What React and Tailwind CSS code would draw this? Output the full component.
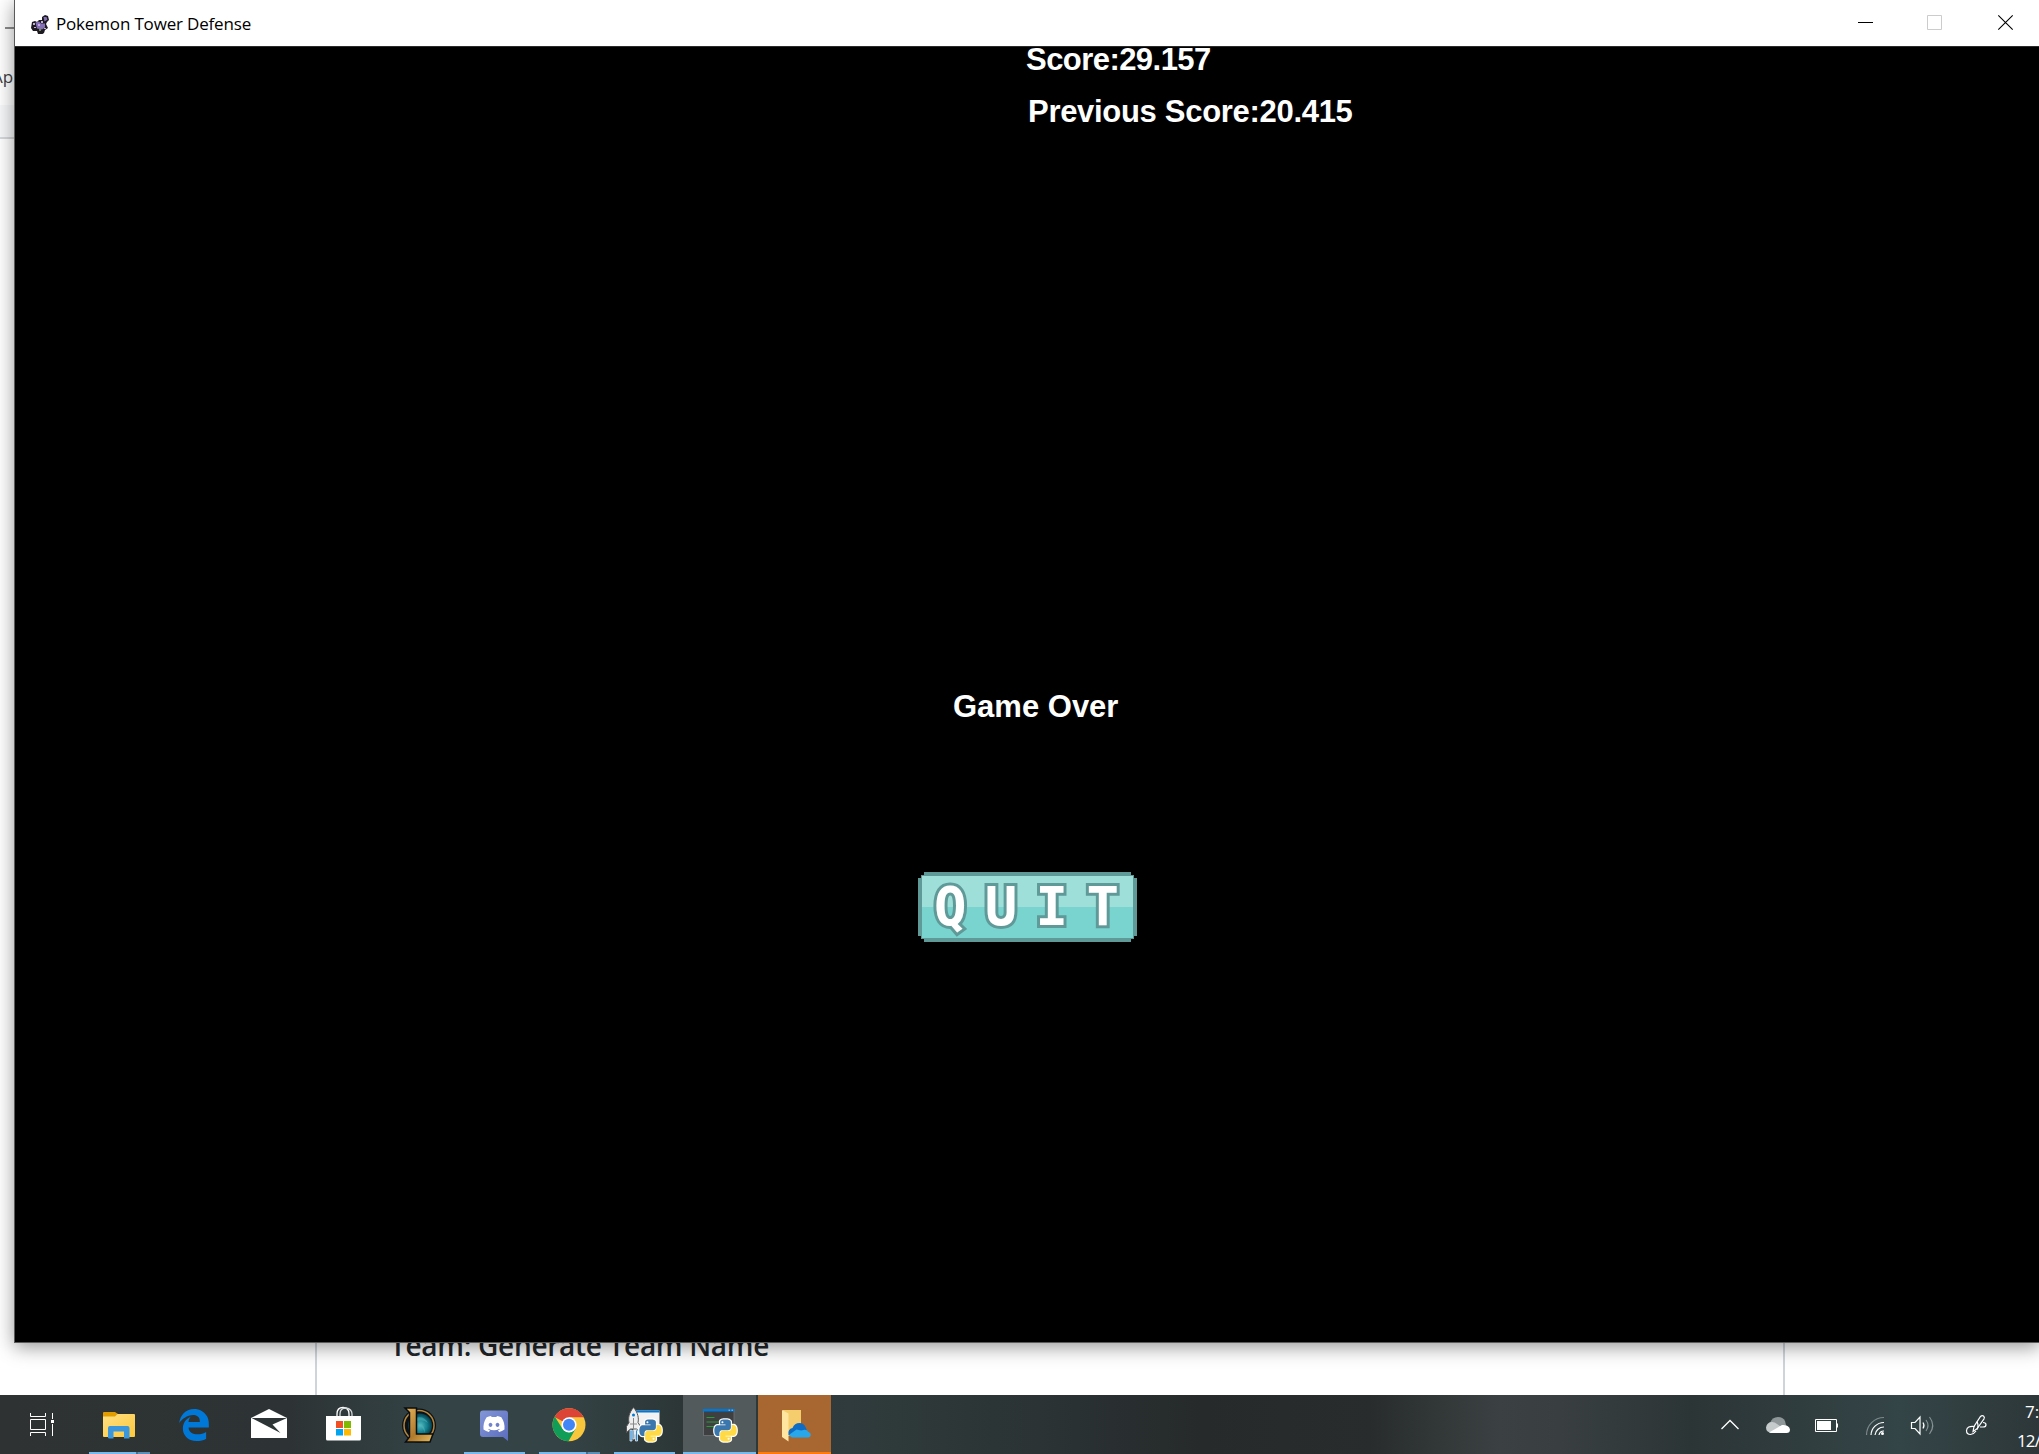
import React from "react";
import { FaDiscord, FaEdgeLegacy } from "react-icons/fa";

const PY_BLUE =
  "M14.25.18l.9.2.73.26.59.3.45.32.34.34.25.34.16.33.1.3.04.26.02.2-.01.13V8.5l-.05.63-.13.55-.21.46-.26.38-.3.31-.33.25-.35.19-.35.14-.33.1-.3.07-.26.04-.21.02H8.77l-.69.05-.59.14-.5.22-.41.27-.33.32-.27.35-.2.36-.15.37-.1.35-.07.32-.04.27-.02.21v3.06H3.17l-.21-.03-.28-.07-.32-.12-.35-.18-.36-.26-.36-.36-.35-.46-.32-.59-.28-.73-.21-.88-.14-1.05-.05-1.23.06-1.22.16-1.04.24-.87.32-.71.36-.57.4-.44.42-.33.42-.24.4-.16.36-.1.32-.05.24-.01h.16l.06.01h8.16v-.83H6.18l-.01-2.75-.02-.37.05-.34.11-.31.17-.28.25-.26.31-.23.38-.2.44-.18.51-.15.58-.12.64-.1.71-.06.77-.04.84-.02 1.27.05z";
const PY_YELLOW =
  "M21.04 6.11l.28.06.32.12.35.18.36.27.36.35.35.47.32.59.28.73.21.88.14 1.04.05 1.23-.06 1.23-.16 1.04-.24.86-.32.71-.36.57-.4.45-.42.33-.42.24-.4.16-.36.09-.32.05-.24.02-.16-.01h-8.22v.82h5.84l.01 2.76.02.36-.05.34-.11.31-.17.29-.25.25-.31.24-.38.2-.44.17-.51.15-.58.13-.64.09-.71.07-.77.04-.84.01-1.27-.04-1.07-.14-.9-.2-.73-.25-.59-.3-.45-.33-.34-.34-.25-.34-.16-.33-.1-.3-.04-.25-.02-.2.01-.13v-5.34l.05-.64.13-.54.21-.46.26-.38.3-.32.33-.24.35-.2.35-.14.33-.1.3-.06.26-.04.21-.02.13-.01h5.84l.69-.05.59-.14.5-.21.41-.28.33-.32.27-.35.2-.36.15-.36.1-.35.07-.32.04-.28.02-.21V6.07h2.09z";

function PythonMark({ x, y, size }) {
  return (
    <svg x={x} y={y} width={size} height={size} viewBox="-1.5 -1.5 27 27">
      <path d={PY_BLUE} fill="#fff" stroke="#fff" strokeWidth="2.6" />
      <path d={PY_YELLOW} fill="#fff" stroke="#fff" strokeWidth="2.6" />
      <path d={PY_BLUE} fill="#3b77ac" />
      <path d={PY_YELLOW} fill="#ffda45" />
      <circle cx="8.7" cy="3" r="1.1" fill="#fff" />
      <circle cx="15.3" cy="21" r="1.1" fill="#fff" />
    </svg>
  );
}

function Glyph({ children }) {
  return (
    <svg width="73" height="59" viewBox="0 0 73 59" className="block">
      {children}
    </svg>
  );
}

const TaskView = () => (
  <Glyph>
    <g fill="none" stroke="#fff" strokeWidth="1">
      <path d="M22.5 18v3.5h15V18M22.5 24.5h15v10h-15zM22.5 41v-3.5h15V41M44.5 18v6M44.5 29v12" />
    </g>
    <rect x="43" y="25" width="3" height="3" fill="#fff" />
  </Glyph>
);

const Explorer = () => (
  <Glyph>
    <defs>
      <linearGradient id="fold" x1="0" y1="0" x2="1" y2="1">
        <stop offset="0" stopColor="#ffe083" />
        <stop offset="1" stopColor="#fcc83c" />
      </linearGradient>
    </defs>
    <path d="M20 18q0-1 1-1h11l3 2-2 4H20z" fill="#e19d00" />
    <path d="M20 21.500h12l2.500-2.500H51q1 0 1 1v21q0 1-1 1H21q-1 0-1-1z" fill="url(#fold)" />
    <path d="M25 43V33q0-2 2-2h17.500q2 0 2 2v10.500h-5.500v-7H30.500v7H26z" fill="#3a96dd" />
  </Glyph>
);

const Edge = () => (
  <Glyph>
    <FaEdgeLegacy x="19.5" y="13.5" size="33" color="#0078d7" />
  </Glyph>
);

const Mail = () => (
  <Glyph>
    <path d="M18 23l18-9 18 9v20H18z" fill="#fff" />
    <path d="M18.500 23H54L39.500 29.500 47.500 38 18.500 23z" fill="#2d3435" />
  </Glyph>
);

const Store = () => (
  <Glyph>
    <g fill="none" stroke="#fff" strokeWidth="1.300">
      <path d="M29 22v-3q0-6.500 6-6.500t6 6.500v3" />
      <path d="M32 22v-3q0-6 6-6 6 1 6 6v3" stroke="#d3d6d6" />
    </g>
    <path d="M18 21h35v23q0 1.500-1.500 1.500h-32Q18 45.500 18 44z" fill="#fff" />
    <rect x="28" y="26" width="7" height="7" fill="#f25022" />
    <rect x="36" y="26" width="7" height="7" fill="#7fba00" />
    <rect x="28" y="34" width="7" height="6.500" fill="#00a4ef" />
    <rect x="36" y="34" width="7" height="6.500" fill="#ffb900" />
  </Glyph>
);

const League = () => (
  <Glyph>
    <defs>
      <linearGradient id="gold" x1="0" y1="0" x2="1" y2="1">
        <stop offset="0" stopColor="#e5b45c" />
        <stop offset=".55" stopColor="#b07a2b" />
        <stop offset="1" stopColor="#e8bd60" />
      </linearGradient>
      <radialGradient id="teal">
        <stop offset="0" stopColor="#55bac0" />
        <stop offset=".6" stopColor="#137f8d" />
        <stop offset="1" stopColor="#063e4c" />
      </radialGradient>
    </defs>
    <circle cx="36" cy="30.500" r="17" fill="#0a1218" />
    <circle cx="36" cy="30.500" r="15" fill="#0a1218" stroke="#b5853a" strokeWidth="1.500" />
    <circle cx="37" cy="30.500" r="12" fill="url(#teal)" />
    <path d="M32 23q9-3 13 5-6-5-13-1zM36 29q6 0 6 9-2-6-6-7z" fill="#52b4b8" opacity=".55" />
    <path d="M22 13h11.500v26H50l-3 8H22.500l4-5V17.500z" fill="url(#gold)" stroke="#0b0e10" strokeWidth="1.500" />
  </Glyph>
);

const Discord = () => (
  <Glyph>
    <defs>
      <linearGradient id="disc" x1="0" y1="0" x2="1" y2="1">
        <stop offset="0" stopColor="#8396d8" />
        <stop offset="1" stopColor="#5a6cbd" />
      </linearGradient>
    </defs>
    <path d="M25 15.500h22q3 0 3 3V46l-5-4H25q-3 0-3-3V18.500q0-3 3-3z" fill="url(#disc)" />
    <FaDiscord x="24.5" y="17.5" size="23" color="#fff" />
  </Glyph>
);

const Chrome = () => (
  <Glyph>
    <g transform="translate(36 29.800)">
      <circle r="16.500" fill="#f8c73c" />
      <path d="M0 0L-14.500-7.900A16.500 16.500 0 0 1 14.700-7.600H0z" fill="#db4437" />
      <path d="M-14.300-8.200A16.500 16.500 0 0 0 -.5 16.500L6.600 4 0 7.700-6.700 3.800z" fill="#0f9d58" />
      <circle r="7.600" fill="#fff" />
      <circle r="6" fill="#4285f4" />
    </g>
  </Glyph>
);

const RocketPython = () => (
  <Glyph>
    <rect x="25" y="15.500" width="26.500" height="24" fill="#f2f2f2" />
    <rect x="25" y="15.500" width="26.500" height="2" fill="#0078d7" />
    <path d="M22 35h2v11h-2zM25 35h1.500v9H25zM27.500 35h2v11h-2z" fill="#2a8ad4" stroke="#fff" strokeWidth=".7" />
    <path d="M25.500 12.500c-4.500 5-5.500 11-4.500 15l-2.500 4v6l4-3.500h6l4 3.500v-6l-2.500-4c1-4 0-10-4.500-15z" fill="#eee" stroke="#555" strokeWidth="1" />
    <path d="M25.500 23v12M22 29h7" stroke="#888" strokeWidth="1" fill="none" />
    <circle cx="25.500" cy="20" r="1.500" fill="#0078d7" />
    <PythonMark x="30" y="23" size="25" />
  </Glyph>
);

const ConsolePython = () => (
  <Glyph>
    <rect x="20.500" y="14.500" width="30.500" height="26" fill="#3d3f40" stroke="#707474" strokeWidth=".8" />
    <rect x="20" y="14" width="31.500" height="2.500" fill="#0078d7" />
    <path d="M45.500 15.200h1.500M48.500 15.200H50" stroke="#9ccbf0" strokeWidth="1" />
    <path d="M23.500 22.500h8M23.500 27h13M23.500 31.500h10" stroke="#2c9a37" strokeWidth="1" />
    <PythonMark x="30" y="23" size="25" />
  </Glyph>
);

const CloudFolder = () => (
  <Glyph>
    <path d="M25 15h18v26H25z" fill="#f5cd6c" />
    <path d="M24 15l6.500 3.500v28L24 42z" fill="#ffe5a0" />
    <path d="M30.500 40q-1-6 4-7 2-5 7-5 4.500 0 6.500 5l3 8-18 0z" fill="#0f6cc4" />
    <path d="M36 42.500h-2q-2.500-1-2.500-3l7-5q4 1 5 1 5-2 7 1.500 3 1 2 4-1 1.500-3 1.500z" fill="#28a8ea" />
  </Glyph>
);

const APPS = [
  { id: "taskview", Icon: TaskView, bar: "none" },
  { id: "explorer", Icon: Explorer, bar: "split" },
  { id: "edge", Icon: Edge, bar: "none" },
  { id: "mail", Icon: Mail, bar: "none" },
  { id: "store", Icon: Store, bar: "none" },
  { id: "league", Icon: League, bar: "none" },
  { id: "discord", Icon: Discord, bar: "single" },
  { id: "chrome", Icon: Chrome, bar: "split" },
  { id: "rocket", Icon: RocketPython, bar: "single" },
  { id: "console", Icon: ConsolePython, bar: "full", cell: "bg-[#535a5b]" },
  { id: "cloud", Icon: CloudFolder, bar: "alert", cell: "bg-[#a86630]" },
];

function RunBar({ kind }) {
  if (kind === "single") return <div className="mx-1.5 h-0.5 bg-[#76b9ed]" />;
  if (kind === "full") return <div className="h-0.5 bg-[#76b9ed]" />;
  if (kind === "alert") return <div className="h-0.5 bg-[#ff7a0a]" />;
  if (kind === "split")
    return (
      <div className="mx-1.5 flex h-0.5">
        <div className="w-[47px] bg-[#76b9ed]" />
        <div className="w-0.5 bg-[#46708f]" />
        <div className="w-3 bg-[#5b8fb8]" />
      </div>
    );
  return null;
}

function Tray() {
  return (
    <svg width="280" height="59" viewBox="1716 0 280 59" className="block shrink-0">
      <path d="M1721.500 34l8.500-8.500 8.500 8.500" fill="none" stroke="#fff" strokeWidth="1.300" />
      <path d="M1770 28q2-6 8-6 5 0 7 4l1 4-8 2z" fill="#8f9798" />
      <path d="M1771.500 38q-5.500-1-5.500-5.500 1-5.500 6-5.500 3 0 5 2l6 4-8 5z" fill="#c5caca" />
      <path d="M1769 37.500l13-7.500q7-.5 8 4.500 0 3.500-3.500 3.500H1771z" fill="#fff" />
      <path d="M1815.500 24.500h21v12h-21zM1837.500 28.500v4" fill="none" stroke="#fff" />
      <rect x="1817" y="26" width="14" height="9" fill="#fff" />
      <g fill="none" strokeWidth="1.200">
        <path d="M1866.500 40a17.500 17.500 0 0 1 17.500-17.500" stroke="#7d898b" />
        <path d="M1871 40a13 13 0 0 1 13-12.500" stroke="#fff" />
        <path d="M1875 40a9 9 0 0 1 9-8" stroke="#fff" />
        <path d="M1879 40a5 5 0 0 1 5-4" stroke="#fff" />
      </g>
      <circle cx="1882.500" cy="38.500" r="1.500" fill="#fff" />
      <path d="M1911.500 27.500h3.500l5-5.500v17l-5-5.500h-3.500z" fill="none" stroke="#fff" strokeWidth="1.200" />
      <path d="M1923 27.500q2 3 0 6" fill="none" stroke="#fff" strokeWidth="1.200" />
      <path d="M1926 25q4 5.500 0 11M1929.500 22q6.500 8.500 0 17" fill="none" stroke="#879294" strokeWidth="1.100" />
      <g fill="none" stroke="#fff" strokeWidth="1.200">
        <path d="M1973 36.500l1-5 6.500-10q1.500-1.500 3-.500 1.500 1.200.5 2.800l-7 10z" />
        <path d="M1974.500 31.500q-7.500-1-8 4 0 4 4 4 3.500-.5 5.500-3.500M1977 26.500q2 4.500 0 8M1983 27.500q3 0 3 2.200 0 2.300-3 2.300h-3" />
      </g>
    </svg>
  );
}

function Taskbar() {
  return (
    <div className="flex h-[59px] w-full shrink-0 items-stretch overflow-hidden bg-[linear-gradient(90deg,#2e3233_0px,#2d3334_290px,#334346_430px,#344346_560px,#2c3637_680px,#2f3b3c_850px,#2b3334_1040px,#262a2b_1200px,#282c2d_1370px,#3b4142_1500px,#393f40_1560px,#2c3536_1690px,#2e393b_1750px,#344547_1900px,#2d3739_2039px)]">
      <div className="flex gap-0.5 pl-2">
        {APPS.map(({ id, Icon, bar, cell }) => (
          <div key={id} className={`flex h-[59px] w-[73px] flex-col ${cell || ""}`}>
            <div className="h-[57px] overflow-hidden">
              <Icon />
            </div>
            <RunBar kind={bar} />
          </div>
        ))}
      </div>
      <div className="ml-[885px] flex">
        <Tray />
        <div className="flex shrink-0 flex-col items-start pl-[21px] pt-[2px] font-['Open_Sans',sans-serif] text-[17px] leading-[29px] text-white">
          <span className="pl-2">7:</span>
          <span className="-tracking-[0.9px]">12/</span>
        </div>
      </div>
    </div>
  );
}

function BackgroundPage() {
  return (
    <div className="flex h-[1395px] w-full shrink-0 flex-col overflow-hidden bg-white">
      <div className="h-[105px] shrink-0">
        <div className="ml-[5px] mt-[27px] h-0.5 w-4 bg-[#8c8c8c]" />
        <div className="-ml-[8px] mt-[36px] font-['Open_Sans',sans-serif] text-[17px] leading-6 text-[#3c4043]">Apps</div>
      </div>
      <div className="h-[34px] shrink-0 border-b-2 border-[#d5d8dc] bg-[#f6f8fa]" />
      <div className="ml-[315px] flex w-[1470px] grow flex-col justify-end border-x-2 border-[#ced4da] pb-[32px] pl-[73px]">
        <div className="whitespace-nowrap font-['Open_Sans',sans-serif] text-[28px] font-semibold leading-9 -tracking-[0.3px] text-[#212529]">
          Team: Generate Team Name
        </div>
      </div>
    </div>
  );
}

function TitleBar() {
  return (
    <div className="flex h-[46px] items-center bg-white">
      <svg width="18" height="19" viewBox="0 0 18 19" className="ml-4 mt-[3px] shrink-0">
        <path d="M1 7l3-1 2 1 2-2h3V2l3-2 3 1 1 4-2 2-1 2 2 4-3 2-1 3-3 2-3-1-1-3-4 0-2-3z" fill="#1d1a22" />
        <path d="M4.500 7.500l3.500-1 2 2 4 0v4l-3 2-5-1zM12.500 2h3l1 2.500-3 2z" fill="#8471b5" />
        <path d="M2 8h2v2H2zM3 12h2v1H3zM13 13h2v1h-2zM10 6h2v2h-2z" fill="#c3b2d6" />
        <path d="M7 9h2v2H7z" fill="#c9a6e8" />
        <path d="M8 14h2v2H8z" fill="#6d8a52" />
      </svg>
      <div className="ml-[7px] mt-[2px] grow whitespace-nowrap font-['Open_Sans',sans-serif] text-[17px] leading-6 -tracking-[0.17px] text-black">
        Pokemon Tower Defense
      </div>
      <svg width="160" height="46" viewBox="1855 0 160 46" className="mr-[25px] shrink-0" fill="none">
        <path d="M1858 22.500h15" stroke="#000" />
        <path d="M1927.500 15.500h14v14h-14z" stroke="#ccc" />
        <path d="M1998.300 15.300l14.400 14.400M2012.700 15.300l-14.400 14.400" stroke="#000" strokeWidth="1.100" />
      </svg>
    </div>
  );
}

function QuitButton() {
  return (
    <button className="ml-[903px] mt-[150px] flex h-[70px] w-[219px] shrink-0 items-center border-4 border-[#5f9a98] bg-[linear-gradient(#9edfda_50%,#79d3cf_50%)] [clip-path:polygon(6px_0,213px_0,213px_3px,216px_3px,216px_6px,219px_6px,219px_64px,216px_64px,216px_67px,213px_67px,213px_70px,6px_70px,6px_67px,3px_67px,3px_64px,0_64px,0_6px,3px_6px,3px_3px,6px_3px)]">
      <span className="pl-[12px] font-['DejaVu_Sans_Mono',monospace] text-[54px] font-bold leading-none tracking-[18.3px] text-white [-webkit-text-stroke:6px_#5f9a98] [paint-order:stroke_fill]">
        QUIT
      </span>
    </button>
  );
}

function GameWindow() {
  return (
    <div className="absolute left-[14px] top-0 flex h-[1343px] w-[2026px] flex-col border-b border-l border-[#5a5a5a] shadow-[0_4px_18px_rgba(0,0,0,0.42)]">
      <TitleBar />
      <div className="flex grow flex-col overflow-hidden border-t border-[#2b2b2b] bg-black font-['Liberation_Sans',Arial,sans-serif] text-[31px] font-bold leading-[30px] text-white">
        <div className="-mt-[2px] ml-[1011px] -tracking-[0.55px]">Score:29.157</div>
        <div className="ml-[1013px] mt-[22px] -tracking-[0.3px]">Previous Score:20.415</div>
        <div className="ml-[938px] mt-[565px]">Game Over</div>
        <QuitButton />
      </div>
    </div>
  );
}

export default function App() {
  return (
    <div className="relative flex h-[1454px] w-[2039px] flex-col overflow-hidden bg-white">
      <BackgroundPage />
      <GameWindow />
      <div className="relative">
        <Taskbar />
      </div>
    </div>
  );
}
